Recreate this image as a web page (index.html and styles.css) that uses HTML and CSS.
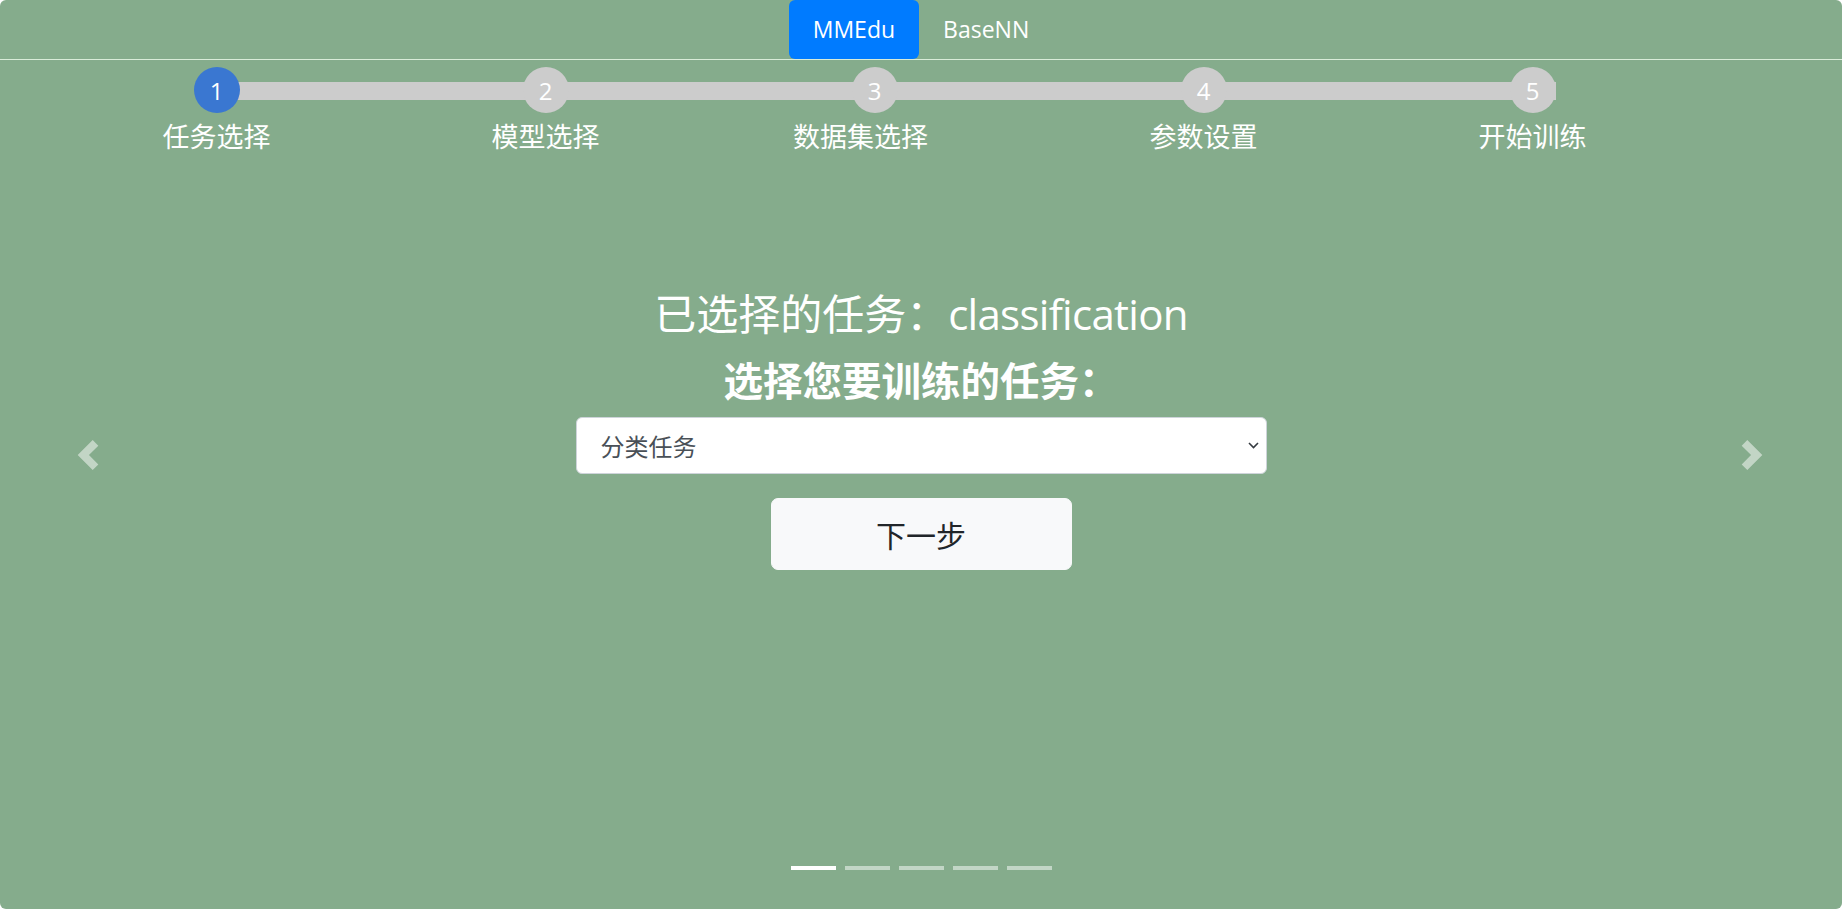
FILE: index.html
```html
<!DOCTYPE html>
<html lang="zh-CN">
<head>
<meta charset="utf-8">
<title>MMEdu</title>
<link rel="stylesheet" href="styles.css">
</head>
<body>
<div class="carousel">
  <nav class="nav">
    <a class="nav-link active">MMEdu</a>
    <a class="nav-link">BaseNN</a>
  </nav>

  <div class="steps">
    <div class="bar"></div>
    <div class="step"><div class="circle active">1</div><div class="label">任务选择</div></div>
    <div class="step"><div class="circle">2</div><div class="label">模型选择</div></div>
    <div class="step"><div class="circle">3</div><div class="label label-long">数据集选择</div></div>
    <div class="step"><div class="circle">4</div><div class="label">参数设置</div></div>
    <div class="step"><div class="circle">5</div><div class="label">开始训练</div></div>
  </div>

  <div class="form">
    <h3 class="title">已选择的任务：<span class="latin">classification</span></h3>
    <h4 class="subtitle">选择您要训练的任务：</h4>
    <div class="select-wrap">
      <select class="select">
        <option>分类任务</option>
        <option>检测任务</option>
      </select>
      <svg class="caret" width="11" height="7" viewBox="0 0 11 7"><path d="M1 1l4.5 4.5L10 1" fill="none" stroke="#343a40" stroke-width="1.6"/></svg>
    </div>
    <button class="btn">下一步</button>
  </div>

  <a class="control prev" aria-label="Previous">
    <svg width="30" height="30" viewBox="0 0 8 8"><path d="M5.25 0l-4 4 4 4 1.5-1.5L4.25 4l2.5-2.5L5.25 0z" fill="#fff"/></svg>
  </a>
  <a class="control next" aria-label="Next">
    <svg width="30" height="30" viewBox="0 0 8 8"><path d="M2.75 0l-1.5 1.5L3.75 4l-2.5 2.5L2.75 8l4-4-4-4z" fill="#fff"/></svg>
  </a>

  <ol class="indicators">
    <li class="active"></li>
    <li></li>
    <li></li>
    <li></li>
    <li></li>
  </ol>
</div>
</body>
</html>
```

FILE: styles.css
```css
html, body {
  margin: 0;
  padding: 0;
  background: #ffffff;
}

body {
  font-family: "Open Sans", "Noto Sans CJK SC", sans-serif;
  color: #ffffff;
}

.carousel {
  position: relative;
  height: 909px;
  background: #85ac8c;
  border-radius: 6px;
  overflow: hidden;
}

.nav {
  display: flex;
  justify-content: center;
  border-bottom: 1px solid #d9ecd9;
}

.nav-link {
  display: block;
  padding: 12px 24px;
  font-size: 23px;
  line-height: 35px;
  color: #ffffff;
  border-radius: 6px;
}

.nav-link.active {
  background: #007bff;
}

.steps {
  position: relative;
  display: grid;
  grid-template-columns: repeat(5, 329px);
  margin: 7px 0 0 52px;
}

.bar {
  position: absolute;
  left: 164px;
  top: 15px;
  width: 1340px;
  height: 18px;
  background: #cccccc;
}

.step {
  display: flex;
  flex-direction: column;
  align-items: center;
}

.circle {
  position: relative;
  z-index: 1;
  width: 46px;
  height: 46px;
  border-radius: 50%;
  background: #cccccc;
  color: #ffffff;
  font-size: 24px;
  display: flex;
  align-items: center;
  justify-content: center;
}

.circle.active {
  background: #3a77d1;
}

.label {
  margin-top: 3px;
  font-family: "Noto Sans CJK SC", sans-serif;
  font-size: 27px;
  line-height: 40px;
  color: #ffffff;
  white-space: nowrap;
}

.label-long {
  margin-right: 28px;
}

.form {
  display: flex;
  flex-direction: column;
  align-items: center;
  margin-top: 133px;
}

.title {
  margin: 0;
  font-size: 42px;
  line-height: 50px;
  font-weight: 400;
}

.title .latin {
  letter-spacing: -0.7px;
}

.subtitle {
  margin: 19px 0 0;
  font-size: 39.5px;
  line-height: 46px;
  font-weight: 700;
}

.select-wrap {
  position: relative;
  margin-top: 13px;
  width: 691px;
  height: 57px;
}

.select {
  display: block;
  width: 100%;
  height: 100%;
  padding: 9px 30px 9px 24px;
  font-family: "Noto Sans CJK SC", sans-serif;
  font-size: 24px;
  color: #495057;
  background: #ffffff;
  border: 1px solid #ced4da;
  border-radius: 6px;
  appearance: none;
  -webkit-appearance: none;
}

.caret {
  position: absolute;
  right: 8px;
  top: 25px;
  pointer-events: none;
}

.btn {
  margin-top: 24px;
  width: 301px;
  height: 72px;
  font-family: "Noto Sans CJK SC", sans-serif;
  font-size: 30px;
  color: #212529;
  background: #f8f9fa;
  border: 1px solid #f8f9fa;
  border-radius: 7px;
}

.control {
  position: absolute;
  top: 440px;
  width: 30px;
  height: 30px;
  opacity: 0.5;
}

.control svg {
  display: block;
}

.control.prev {
  left: 73px;
}

.control.next {
  right: 75px;
}

.indicators {
  position: absolute;
  left: 0;
  right: 0;
  bottom: 39px;
  margin: 0;
  padding: 0;
  list-style: none;
  display: flex;
  justify-content: center;
  gap: 9px;
}

.indicators li {
  width: 45px;
  height: 4px;
  background: rgba(255, 255, 255, 0.5);
}

.indicators li.active {
  background: #ffffff;
}
```
